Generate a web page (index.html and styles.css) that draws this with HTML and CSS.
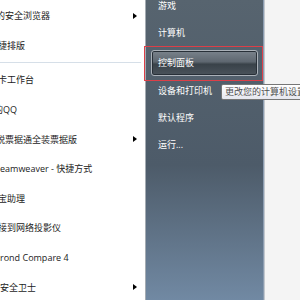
FILE: index.html
```html
<!DOCTYPE html>
<html lang="zh-CN">
<head>
    <meta charset="UTF-8">
    <title>开始菜单</title>
    <link rel="stylesheet" href="styles.css">
</head>
<body>
    <div class="menu">
        <div class="programs">
            <div class="prog"><span class="label cut-m">的安全浏览器</span><span class="arrow"></span></div>
            <div class="prog"><span class="label cut-s">捷排版</span></div>
            <div class="sep"></div>
            <div class="prog"><span class="label cut-s">卡工作台</span></div>
            <div class="prog"><span class="label cut-l">的QQ</span></div>
            <div class="prog"><span class="label cut-m">税票据通全装票据版</span><span class="arrow"></span></div>
            <div class="prog"><span class="label">eamweaver - 快捷方式</span></div>
            <div class="prog"><span class="label cut-s">宝助理</span></div>
            <div class="prog"><span class="label cut-s">接到网络投影仪</span></div>
            <div class="prog"><span class="label">rond Compare 4</span></div>
            <div class="prog"><span class="label">安全卫士</span><span class="arrow"></span></div>
        </div>

        <div class="places">
            <div class="place first">游戏</div>
            <div class="place">计算机</div>
            <div class="place active">控制面板</div>
            <div class="place">设备和打印机</div>
            <div class="place">默认程序</div>
            <div class="place">运行...</div>
        </div>

        <div class="desk"></div>

        <!-- 标注框 -->
        <div class="mark"></div>
        <div class="tip">更改您的计算机设置</div>
    </div>
</body>
</html>
```

FILE: styles.css
```css
body {
    margin: 0;
    width: 300px;
    height: 300px;
    overflow: hidden;
    background: #fff;
    font-family: 'Open Sans', 'Noto Sans CJK SC', sans-serif;
    font-size: 9px;
}
.menu {
    position: relative;
    display: flex;
    height: 300px;
}
.programs {
    width: 145px;
    flex-shrink: 0;
    overflow: hidden;
    padding-top: 1px;
    border-right: 1px solid #a4abb2;
    background: #fff;
    color: #1b1b1b;
}
.prog {
    height: 29.6px;
    display: flex;
    align-items: center;
    justify-content: space-between;
    padding-right: 8px;
    white-space: nowrap;
}
.label {
    display: block;
}
.cut-s { margin-left: -2px; }
.cut-m { margin-left: -4px; }
.cut-l { margin-left: -6px; }
.arrow {
    width: 0;
    height: 0;
    border-left: 4px solid #000;
    border-top: 3px solid transparent;
    border-bottom: 3px solid transparent;
}
.sep {
    height: 1px;
    margin: 2px 4px 2px 0;
    background: #d6dfe8;
}
.places {
    width: 118px;
    flex-shrink: 0;
    padding: 0 5px;
    box-sizing: border-box;
    background: linear-gradient(#57646f 0%, #4d5b69 55%, #7189a3 100%);
    border-right: 1px solid #8b9cb0;
    color: #fff;
}
.place {
    height: 27px;
    display: flex;
    align-items: center;
    padding-left: 7px;
    white-space: nowrap;
}
.place.first {
    margin-top: -8.5px;
}
.place.active {
    height: 24px;
    margin: 4px 0 1px;
    padding-left: 6px;
    border: 1px solid #aab1b8;
    border-radius: 3px;
    box-shadow: inset 0 0 0 1px #283038;
    background: linear-gradient(#7a838c 0%, #5e6770 45%, #394249 55%, #4a535b 100%);
}
.desk {
    flex: 1;
    background: #f4f4f4;
    border-left: 1px solid #c3c8ce;
}
.mark {
    position: absolute;
    left: 144px;
    top: 46px;
    width: 117px;
    height: 33px;
    border: 1px solid #dc3f48;
}
.tip {
    position: absolute;
    left: 221px;
    top: 84px;
    height: 14px;
    line-height: 14px;
    padding: 0 4px 0 3px;
    border: 1px solid #767676;
    border-radius: 2px;
    background: linear-gradient(#ffffff, #e6e7ef);
    color: #4f4f4f;
    white-space: nowrap;
}
```
